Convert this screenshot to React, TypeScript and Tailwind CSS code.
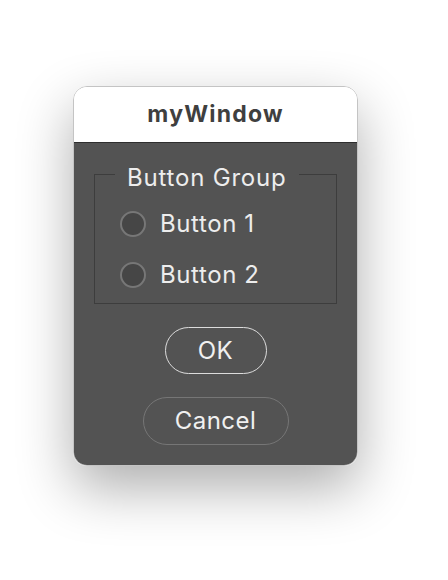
import { useState } from "react";

// ─── Radio row ───────────────────────────────────────────────────

function RadioRow({
  label,
  checked,
  onSelect,
}: {
  label: string;
  checked: boolean;
  onSelect: () => void;
}) {
  return (
    <label className="flex items-center gap-[14px] h-[40px] pl-[25px] cursor-pointer">
      <span className="w-[26px] h-[26px] rounded-full border-2 border-[#777777] bg-[#464646] flex items-center justify-center">
        {checked && <span className="w-[10px] h-[10px] rounded-full bg-white" />}
      </span>
      <input type="radio" className="hidden" checked={checked} onChange={onSelect} />
      <span className="text-[24px] leading-[28px] tracking-[0.6px] text-[#ededed]">{label}</span>
    </label>
  );
}

export default function App() {
  const [selected, setSelected] = useState<number | null>(null);

  return (
    <div
      className="min-h-[580px] bg-white pt-[86px] pl-[73px]"
      style={{ fontFamily: "Inter, 'Liberation Sans', Arial, sans-serif" }}
    >
      <div className="w-[285px] h-[380px] rounded-[14px] overflow-hidden border border-[#c4c4c4] shadow-[0_22px_55px_rgba(0,0,0,0.32)] flex flex-col">
        {/* title bar */}
        <div className="h-[56px] bg-white border-b border-[#2e2e2e] flex items-center justify-center">
          <span className="text-[23px] font-bold text-[#3f3f3f] tracking-[1.2px]">myWindow</span>
        </div>

        {/* body */}
        <div className="flex-1 bg-[#535353] px-[20px] pt-[13px] flex flex-col items-center">
          <fieldset className="w-full border border-[#3d3d3d] pb-[8px]">
            <legend className="ml-[20px] px-[12px] pt-[8px] text-[24px] leading-[28px] tracking-[0.8px] text-[#ededed]">
              Button Group
            </legend>
            <div className="mt-[12px] flex flex-col gap-[11px]">
              <RadioRow label="Button 1" checked={selected === 1} onSelect={() => setSelected(1)} />
              <RadioRow label="Button 2" checked={selected === 2} onSelect={() => setSelected(2)} />
            </div>
          </fieldset>

          <button className="mt-[23px] w-[102px] h-[47px] rounded-full border-[1.5px] border-[#dcdcdc] text-[24px] tracking-[0.5px] text-[#f0f0f0]">
            OK
          </button>
          <button className="mt-[23px] w-[146px] h-[48px] rounded-full border-[1.5px] border-[#767676] text-[24px] tracking-[0.5px] text-[#f0f0f0]">
            Cancel
          </button>
        </div>
      </div>
    </div>
  );
}
